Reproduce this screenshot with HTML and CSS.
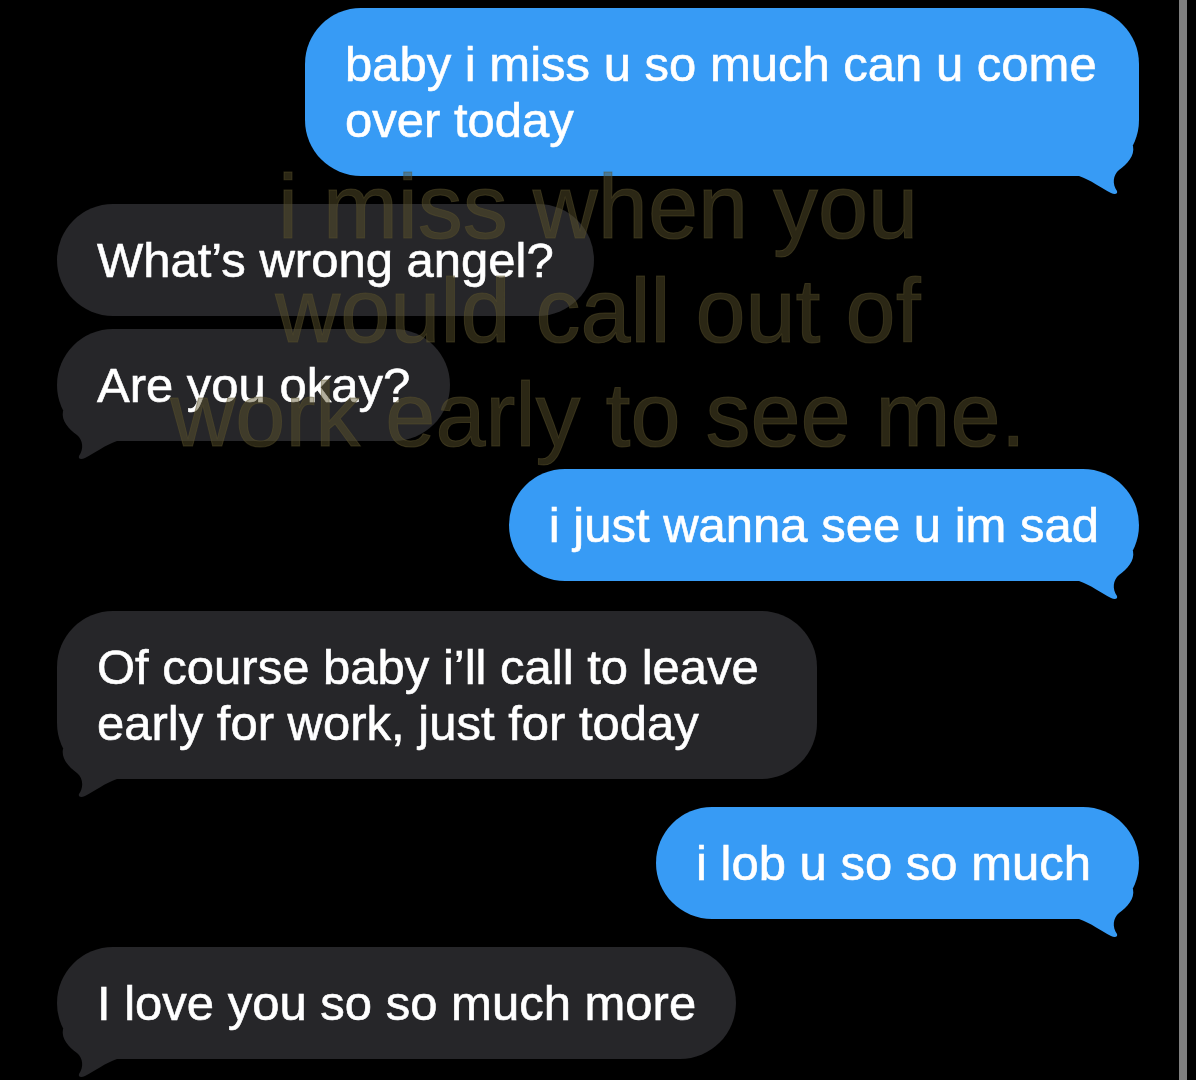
FILE: index.html
```html
<!DOCTYPE html>
<html>
<head>
  <title>Messages</title>
  <link rel="stylesheet" href="styles.css">
</head>
<body>
  <div class="screen">
    <div class="chat">
      <div class="bubble sent">
        baby i miss u so much can u come over today
        <svg class="tail" viewBox="0 0 60 50"><path d="M0,0 L54,0 C56,10 48,18 40,24 C34,29 33,38 38,45 C39,48 36,49 32,47 C22,42 12,34 0,30 Z"/></svg>
      </div>
      <div class="bubble received">What’s wrong angel?</div>
      <div class="bubble received close">
        Are you okay?
        <svg class="tail" viewBox="0 0 60 50"><path d="M0,0 L54,0 C56,10 48,18 40,24 C34,29 33,38 38,45 C39,48 36,49 32,47 C22,42 12,34 0,30 Z"/></svg>
      </div>
      <div class="bubble sent">
        i just wanna see u im sad
        <svg class="tail" viewBox="0 0 60 50"><path d="M0,0 L54,0 C56,10 48,18 40,24 C34,29 33,38 38,45 C39,48 36,49 32,47 C22,42 12,34 0,30 Z"/></svg>
      </div>
      <div class="bubble received wide">
        Of course baby i’ll call to leave early for work, just for today
        <svg class="tail" viewBox="0 0 60 50"><path d="M0,0 L54,0 C56,10 48,18 40,24 C34,29 33,38 38,45 C39,48 36,49 32,47 C22,42 12,34 0,30 Z"/></svg>
      </div>
      <div class="bubble sent roomy">
        i lob u so so much
        <svg class="tail" viewBox="0 0 60 50"><path d="M0,0 L54,0 C56,10 48,18 40,24 C34,29 33,38 38,45 C39,48 36,49 32,47 C22,42 12,34 0,30 Z"/></svg>
      </div>
      <div class="bubble received">
        I love you so so much more
        <svg class="tail" viewBox="0 0 60 50"><path d="M0,0 L54,0 C56,10 48,18 40,24 C34,29 33,38 38,45 C39,48 36,49 32,47 C22,42 12,34 0,30 Z"/></svg>
      </div>
    </div>
    <div class="divider"></div>
    <div class="edge"></div>

    <!-- caption laid over the conversation -->
    <p class="caption">i miss when you<br>would call out of<br>work early to see me.</p>
  </div>
</body>
</html>
```

FILE: styles.css
```css
body {
  margin: 0;
  padding: 0;
  background-color: #000;
  font-family: "Liberation Sans", Arial, sans-serif;
  overflow: hidden;
}

.screen {
  position: relative;
  display: flex;
  width: 1196px;
  height: 1080px;
  background-color: #000;
}

.chat {
  width: 1179px;
  padding: 8px 40px 0 57px;
  box-sizing: border-box;
  display: flex;
  flex-direction: column;
  gap: 28px;
}

.bubble {
  position: relative;
  box-sizing: border-box;
  padding: 28px 40px;
  border-radius: 56px;
  font-size: 49px;
  line-height: 56px;
  color: #fff;
  -webkit-text-stroke: 0.6px #fff;
}

.bubble.sent {
  align-self: flex-end;
  max-width: 834px;
  background-color: #379bf5;
}

.bubble.received {
  align-self: flex-start;
  max-width: 760px;
  background-color: #262629;
}

.bubble.close {
  margin-top: -15px;
}

.bubble.wide {
  margin-top: 2px;
}

.bubble.roomy {
  padding-right: 48px;
}

.tail {
  position: absolute;
  bottom: -20px;
  width: 60px;
  height: 50px;
}

.sent .tail {
  right: 0;
  fill: #379bf5;
}

.received .tail {
  left: 0;
  fill: #262629;
  transform: scaleX(-1);
}

.divider {
  width: 8px;
  background-color: #7f7f7f;
}

.edge {
  flex: 1;
}

.caption {
  position: absolute;
  top: 155px;
  left: 0;
  width: 1196px;
  margin: 0;
  text-align: center;
  font-size: 90px;
  line-height: 104px;
  color: rgba(92, 83, 45, 0.47);
  -webkit-text-stroke: 1px rgba(92, 83, 45, 0.47);
  pointer-events: none;
}
```
